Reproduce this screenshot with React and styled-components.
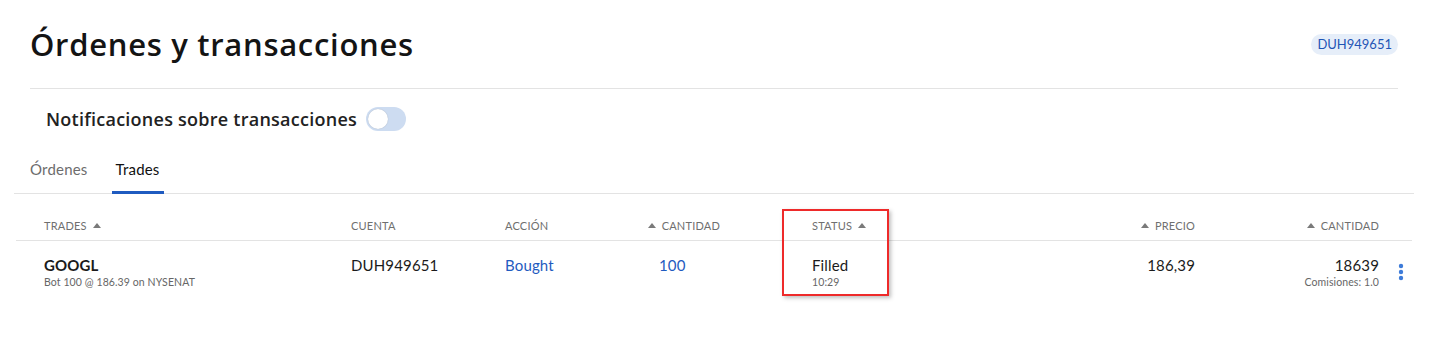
import React from 'react';
import styled, { createGlobalStyle } from 'styled-components';

const GlobalStyle = createGlobalStyle`
  body {
    margin: 0;
    background: #ffffff;
    font-family: Lato, "Liberation Sans", Arial, sans-serif;
    color: #1b1b1b;
  }
`;

const Page = styled.div`
  width: 1441px;
  height: 350px;
  overflow: hidden;
`;

const Header = styled.header`
  height: 88px;
  margin: 0 43px 0 30px;
  display: flex;
  align-items: center;
  justify-content: space-between;
  border-bottom: 1px solid #e3e3e3;
`;

const Title = styled.h1`
  margin: 0;
  font-family: "Open Sans", Lato, sans-serif;
  font-size: 31px;
  font-weight: 600;
  line-height: 40px;
  letter-spacing: 0.7px;
  color: #141414;
`;

const Badge = styled.span`
  background: #e6eef9;
  color: #1f55b5;
  font-size: 13px;
  line-height: 15px;
  padding: 3px 6px;
  border-radius: 11px;
`;

const NotifRow = styled.div`
  height: 60px;
  padding-left: 46px;
  display: flex;
  align-items: center;
  gap: 9px;
`;

const NotifLabel = styled.span`
  font-family: "Open Sans", Lato, sans-serif;
  font-size: 18px;
  font-weight: 600;
  line-height: 24px;
  letter-spacing: 0.25px;
  color: #222;
`;

const Toggle = styled.span`
  width: 40px;
  height: 24px;
  border-radius: 12px;
  background: #cddcf1;
  display: flex;
  align-items: center;
  padding: 2px;
  box-sizing: border-box;

  &::before {
    content: '';
    width: 20px;
    height: 20px;
    border-radius: 50%;
    background: #fff;
    box-shadow: 0 0 1px rgba(0, 0, 0, 0.25);
  }
`;

const Tabs = styled.nav`
  margin: 0 27px 0 14px;
  padding-left: 16px;
  display: flex;
  gap: 20px;
  border-bottom: 1px solid #e3e3e3;
`;

const Tab = styled.span`
  height: 45px;
  box-sizing: border-box;
  padding: 10px 4px 0;
  margin-bottom: -1px;
  font-size: 15px;
  line-height: 20px;
  letter-spacing: 0.2px;
  color: ${(p) => (p.$active ? '#111' : '#6d6d6d')};
  border-bottom: 3px solid ${(p) => (p.$active ? '#1f5bc0' : 'transparent')};
  margin-left: ${(p) => (p.$first ? '-4px' : '0')};
`;

const Table = styled.div`
  position: relative;
  margin: 0 29px 0 16px;
  display: grid;
  grid-template-columns: 335px 154px 140px 155px 200px 215px 174px 23px;
`;

const HeadCell = styled.div`
  padding: 25px ${(p) => p.$pr || 0}px 7px ${(p) => p.$pl || 0}px;
  font-size: 11px;
  line-height: 14px;
  letter-spacing: 0.2px;
  text-transform: uppercase;
  color: #6f6f6f;
  border-bottom: 1px solid #e3e3e3;
  display: flex;
  align-items: center;
  gap: 6px;
  justify-content: ${(p) => (p.$right ? 'flex-end' : 'flex-start')};
`;

const SortArrow = styled.span`
  width: 0;
  height: 0;
  border-left: 4px solid transparent;
  border-right: 4px solid transparent;
  border-bottom: 5px solid #7a7a7a;
  margin-top: -1px;
`;

const Cell = styled.div`
  padding: 14px ${(p) => p.$pr || 0}px 14px ${(p) => p.$pl || 0}px;
  text-align: ${(p) => (p.$right ? 'right' : 'left')};
`;

const Primary = styled.div`
  font-size: 15px;
  line-height: 20px;
  letter-spacing: 0.15px;
  font-weight: ${(p) => (p.$bold ? 700 : 400)};
  color: ${(p) => (p.$blue ? '#1f5bc0' : '#1b1b1b')};
`;

const Secondary = styled.div`
  font-size: 10.5px;
  line-height: 14px;
  letter-spacing: 0.1px;
  color: #666;
`;

const Kebab = styled.div`
  padding-top: 22px;
  display: flex;
  justify-content: center;
`;

const Highlight = styled.div`
  position: absolute;
  left: 766px;
  top: 15px;
  width: 107px;
  height: 87px;
  box-sizing: border-box;
  border: 2px solid #ee2a2a;
  box-shadow: 2px 2px 4px rgba(0, 0, 0, 0.25);
  pointer-events: none;
`;

const columns = [
  { label: 'Trades', pl: 28, arrowAfter: true },
  { label: 'Cuenta' },
  { label: 'Acción' },
  { label: 'Cantidad', right: true, pr: 80, arrowBefore: true },
  { label: 'Status', pl: 12, arrowAfter: true },
  { label: 'Precio', right: true, pr: 20, arrowBefore: true },
  { label: 'Cantidad', right: true, pr: 10, arrowBefore: true },
  { label: '' },
];

export default function App() {
  return (
    <Page>
      <GlobalStyle />
      <Header>
        <Title>Órdenes y transacciones</Title>
        <Badge>DUH949651</Badge>
      </Header>
      <NotifRow>
        <NotifLabel>Notificaciones sobre transacciones</NotifLabel>
        <Toggle />
      </NotifRow>
      <Tabs>
        <Tab $first>Órdenes</Tab>
        <Tab $active>Trades</Tab>
      </Tabs>
      <Table>
        {columns.map((c, i) => (
          <HeadCell key={i} $pl={c.pl} $pr={c.pr} $right={c.right}>
            {c.arrowBefore && <SortArrow />}
            {c.label}
            {c.arrowAfter && <SortArrow />}
          </HeadCell>
        ))}

        <Cell $pl={28}>
          <Primary $bold>GOOGL</Primary>
          <Secondary>Bot 100 @ 186.39 on NYSENAT</Secondary>
        </Cell>
        <Cell>
          <Primary>DUH949651</Primary>
        </Cell>
        <Cell>
          <Primary $blue>Bought</Primary>
        </Cell>
        <Cell $pl={14}>
          <Primary $blue>100</Primary>
        </Cell>
        <Cell $pl={12}>
          <Primary>Filled</Primary>
          <Secondary>10:29</Secondary>
        </Cell>
        <Cell $right $pr={20}>
          <Primary>186,39</Primary>
        </Cell>
        <Cell $right $pr={10}>
          <Primary>18639</Primary>
          <Secondary>Comisiones: 1.0</Secondary>
        </Cell>
        <Kebab>
          <svg width="6" height="18" viewBox="0 0 6 18">
            <circle cx="3" cy="3" r="2.2" fill="#3d7bd9" />
            <circle cx="3" cy="9" r="2.2" fill="#3d7bd9" />
            <circle cx="3" cy="15" r="2.2" fill="#3d7bd9" />
          </svg>
        </Kebab>

        <Highlight />
      </Table>
    </Page>
  );
}
